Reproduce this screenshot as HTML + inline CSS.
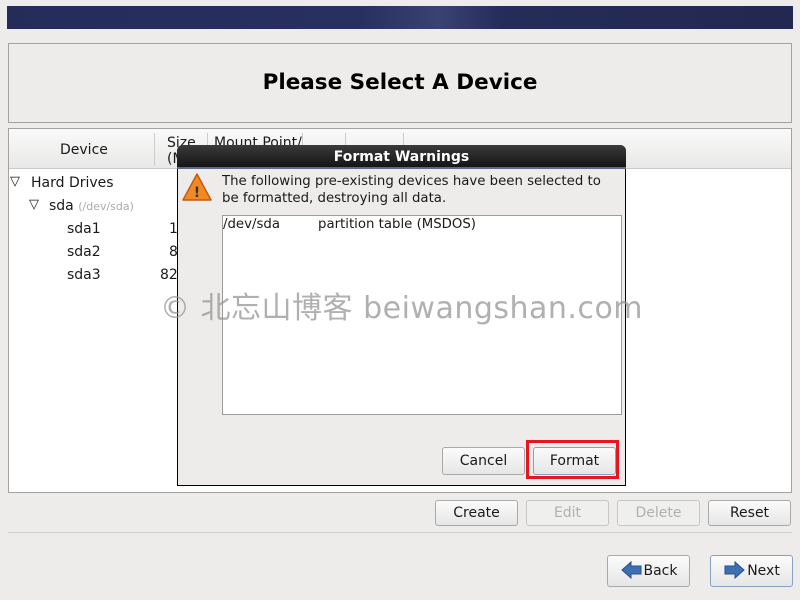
<!DOCTYPE html>
<html><head><meta charset="utf-8"><style>
*{box-sizing:border-box;margin:0;padding:0}
body{width:800px;height:600px;background:#edeceb;font-family:"DejaVu Sans","Liberation Sans",sans-serif;font-size:14px;color:#1a1a1a;position:relative;overflow:hidden}
.abs{position:absolute}
.btn{position:absolute;border:1px solid #a9a9a9;border-radius:3px;background:linear-gradient(#fbfbfb,#e6e6e6);text-align:center;font-size:14px;line-height:24px}
.dis{color:#b0b0b0;border-color:#c6c6c6;background:#efefee}
</style></head><body>
<div class="abs" style="left:7px;top:6px;width:786px;height:23px;background:linear-gradient(90deg,#262c5a,#283062 45%,#3a4274 55%,#262c5a 63%,#22284f)"></div>
<div class="abs" style="left:8px;top:43px;width:784px;height:80px;border:1px solid #a2a2a2"></div>
<div class="abs" style="left:0;top:70px;width:800px;text-align:center;font-size:21.5px;font-weight:bold;color:#000">Please Select A Device</div>
<div class="abs" style="left:8px;top:128px;width:784px;height:365px;border:1px solid #a2a2a2;background:#fff"></div>
<div class="abs" style="left:9px;top:129px;width:782px;height:40px;background:linear-gradient(#fafafa,#e8e8e7);border-bottom:1px solid #c8c8c8"></div>
<div class="abs" style="left:154px;top:133px;width:1px;height:33px;background:#ccc"></div>
<div class="abs" style="left:207px;top:133px;width:1px;height:33px;background:#ccc"></div>
<div class="abs" style="left:302px;top:133px;width:1px;height:33px;background:#ccc"></div>
<div class="abs" style="left:345px;top:133px;width:1px;height:33px;background:#ccc"></div>
<div class="abs" style="left:403px;top:133px;width:1px;height:33px;background:#ccc"></div>
<div class="abs" style="left:60px;top:142px">Device</div>
<div class="abs" style="left:167px;top:135px">Size<br>(M</div>
<div class="abs" style="left:214px;top:135px">Mount Point/</div>
<div class="abs" style="left:10px;top:174px;font-size:13px">▽</div>
<div class="abs" style="left:31px;top:175px">Hard Drives</div>
<div class="abs" style="left:29px;top:197px;font-size:13px">▽</div>
<div class="abs" style="left:49px;top:198px">sda <span style="font-size:11px;color:#aaa">(/dev/sda)</span></div>
<div class="abs" style="left:67px;top:221px">sda1</div><div class="abs" style="left:169px;top:221px">1</div>
<div class="abs" style="left:67px;top:244px">sda2</div><div class="abs" style="left:169px;top:244px">8</div>
<div class="abs" style="left:67px;top:267px">sda3</div><div class="abs" style="left:160px;top:267px">82</div>

<div class="abs" style="left:177px;top:145px;width:449px;height:341px;background:#edeceb;border:1px solid #000;border-radius:6px 6px 0 0"></div>
<div class="abs" style="left:177px;top:145px;width:449px;height:24px;background:linear-gradient(#3a3a3a,#151515);border-radius:6px 6px 0 0;border-bottom:2px solid #5a6a8a;color:#fff;font-weight:bold;text-align:center;line-height:25px">Format Warnings</div>
<svg class="abs" style="left:181px;top:171px" width="32" height="32" viewBox="0 0 32 32"><path d="M16 3 L30 29 L2 29 Z" fill="#f08a24" stroke="#c55a10" stroke-width="1.5" stroke-linejoin="round"/><text x="16" y="26" font-size="14" font-weight="bold" text-anchor="middle" fill="#333" font-family="DejaVu Sans">!</text></svg>
<div class="abs" style="left:222px;top:173px;line-height:17px;font-size:13.3px">The following pre-existing devices have been selected to<br>be formatted, destroying all data.</div>
<div class="abs" style="left:222px;top:215px;width:400px;height:200px;background:#fff;border:1px solid #9c9c9c"></div>
<div class="abs" style="left:223px;top:217px;font-size:13.3px">/dev/sda</div>
<div class="abs" style="left:318px;top:217px;font-size:13.3px">partition table (MSDOS)</div>
<div class="btn" style="left:442px;top:447px;width:83px;height:28px;line-height:26px">Cancel</div>
<div class="abs" style="left:526px;top:440px;width:93px;height:39px;border:3px solid #e8141e"></div>
<div class="btn" style="left:533px;top:447px;width:83px;height:28px;line-height:26px;border-color:#8aa0c0">Format</div>

<div class="abs" style="left:160px;top:283px;font-size:30px;letter-spacing:0.5px;color:rgba(150,150,150,.75);font-family:'DejaVu Sans','Noto Sans CJK SC',sans-serif;white-space:nowrap">© 北忘山博客 beiwangshan.com</div>

<div class="btn" style="left:435px;top:500px;width:83px;height:26px">Create</div>
<div class="btn dis" style="left:526px;top:500px;width:83px;height:26px">Edit</div>
<div class="btn dis" style="left:617px;top:500px;width:83px;height:26px">Delete</div>
<div class="btn" style="left:708px;top:500px;width:83px;height:26px">Reset</div>
<div class="abs" style="left:8px;top:532px;width:784px;height:1px;background:#cfcfcf"></div>
<div class="btn" style="left:607px;top:555px;width:83px;height:32px;line-height:30px;padding-left:24px">Back</div>
<svg class="abs" style="left:621px;top:560px" width="22" height="20"><path d="M1 10 L10 2 L10 6 L20 6 L20 14 L10 14 L10 18 Z" fill="#3e6fb0" stroke="#24508c"/></svg>
<div class="btn" style="left:710px;top:555px;width:83px;height:32px;line-height:30px;padding-left:24px;border-color:#8aa0c0">Next</div>
<svg class="abs" style="left:723px;top:560px" width="22" height="20"><path d="M21 10 L12 2 L12 6 L2 6 L2 14 L12 14 L12 18 Z" fill="#3e6fb0" stroke="#24508c"/></svg>
</body></html>
